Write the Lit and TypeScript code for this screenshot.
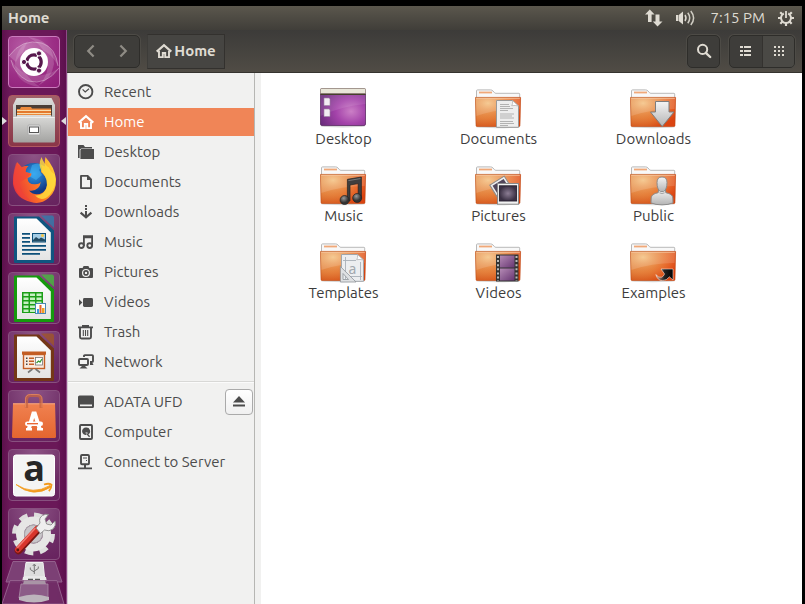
import { LitElement, html, svg, css, type TemplateResult, type SVGTemplateResult } from "lit";
import { customElement, property, state } from "lit/decorators.js";
import { classMap } from "lit/directives/class-map.js";

type Drawing = SVGTemplateResult;

/* ---------- symbolic 16px glyphs ---------- */
const glyphs: Record<string, Drawing> = {
  recent: svg`<circle cx="7.700" cy="7.700" r="6.700" fill="none" stroke="currentColor" stroke-width="1.900"/>
    <path d="M4.600 5.400 7.200 8 11 4.800" fill="none" stroke="currentColor" stroke-width="1.200"/>`,
  home: svg`<path d="M.7 8.600 8 2.200l7.300 6.400" fill="none" stroke="currentColor" stroke-width="2.200"/>
    <path d="M3 8v6.100h3.800V10h2.400v4.100H13V8" fill="none" stroke="currentColor" stroke-width="1.900"/>`,
  desktop: svg`<path d="M0 1h5.500l1.500 2h7v1.400H3.200L1.600 5.600V14H0z"/><path d="M3 5h13v10H2.400V6.400z"/>`,
  documents: svg`<path d="M3 1.900h6.600L13 5.400v8.700H3z" fill="none" stroke="currentColor" stroke-width="1.900" stroke-linejoin="round"/>
    <path d="M9 1v5h5L9.400 1z"/>`,
  downloads: svg`<path d="M7 1h2v2H7zM7 4h2v2H7zM7 7h2v5H7z"/>
    <path d="M2.600 8.600 8 13.400l5.400-4.800" fill="none" stroke="currentColor" stroke-width="2.100"/>`,
  music: svg`<path d="M5.900 12V2.200h8.200V11M5.900 3.400h8.200" fill="none" stroke="currentColor" stroke-width="1.800"/>
    <circle cx="3.400" cy="11.600" r="2.400" fill="none" stroke="currentColor" stroke-width="1.900"/>
    <circle cx="11.700" cy="11.600" r="2.400" fill="none" stroke="currentColor" stroke-width="1.900"/>`,
  pictures: svg`<path fill-rule="evenodd" d="M2 4h2.600l1-2h4.800l1 2H14q1 0 1 1v8q0 1-1 1H2q-1 0-1-1V5q0-1 1-1zM8 4.900a4 4 0 1 0 0 8 4 4 0 0 0 0-8z"/>
    <circle cx="8" cy="8.900" r="2" fill="none" stroke="currentColor" stroke-width="1.600"/>`,
  videos: svg`<rect x="5" y="4" width="10" height="9" rx="1.400"/><path d="M1 5.200 4.400 8.500 1 11.800z"/>`,
  trash: svg`<path d="M0 2.400h15v1.900H0zM4 .9h7v1.600H4z"/>
    <path d="M2 4v9q0 1.500 1.500 1.500h8q1.500 0 1.500-1.500V4" fill="none" stroke="currentColor" stroke-width="1.900"/>
    <path d="M5.300 6v6M7.500 6v6M9.700 6v6" stroke="currentColor" stroke-width="1.100"/>`,
  network: svg`<path d="M6 3V2q0-.9.9-.9h7.200q.9 0 .9.900v5q0 .9-.9.900H12" fill="none" stroke="currentColor" stroke-width="1.900"/>
    <path d="M12 8h2l1.500 3H12z"/>
    <rect x="1" y="5" width="9" height="6" rx="1" fill="none" stroke="currentColor" stroke-width="1.900"/>
    <path d="M4 12h3l2.500 2.600h-8z"/>`,
  drive: svg`<path fill-rule="evenodd" d="M1.600 1.500h12.800Q16 1.500 16 3.100v9.300q0 1.600-1.600 1.600H1.600Q0 14 0 12.400V3.100Q0 1.500 1.600 1.500zM2 10.600v1.600h12v-1.600z"/>`,
  computer: svg`<rect x="2" y="1" width="12" height="14" rx="1" fill="none" stroke="currentColor" stroke-width="1.900"/>
    <path d="M8 3.600a3.700 3.700 0 1 0 .6 7.300L7.400 8.400l2 .2 1 1.800A3.700 3.700 0 0 0 8 3.600z"/>
    <path d="m8.600 9.400 3 3.400" stroke="currentColor" stroke-width="1.400"/>`,
  server: svg`<rect x="3" y="1" width="8" height="9.200" rx="1" fill="none" stroke="currentColor" stroke-width="1.900"/>
    <path d="M5 3.400h4v1.200H5zM8 6h1v1H8zM6 10h2v4H6zM0 13.400h14v1.800H0z"/>`,
  eject: svg`<path d="M8 2 14 8.600H2zM2 10.600h12v2H2z"/>`,
  back: svg`<path d="M10.600 2.400 5.200 8l5.400 5.600" fill="none" stroke="currentColor" stroke-width="2.200"/>`,
  forward: svg`<path d="M5.400 2.400 10.800 8l-5.400 5.600" fill="none" stroke="currentColor" stroke-width="2.200"/>`,
  search: svg`<circle cx="6.600" cy="6.400" r="4.600" fill="none" stroke="currentColor" stroke-width="2"/>
    <path d="m9.800 9.800 4.400 4.200" stroke="currentColor" stroke-width="2.400" stroke-linecap="round"/>`,
  list: svg`<path d="M2 3h3v2H2zM6 3h7v2H6zM2 7h3v2H2zM6 7h7v2H6zM2 11h3v2H2zM6 11h7v2H6z"/>`,
  grid: svg`<path d="M3 3h2v2H3zM7 3h2v2H7zM11 3h2v2h-2zM3 7h2v2H3zM7 7h2v2H7zM11 7h2v2h-2zM3 11h2v2H3zM7 11h2v2H7zM11 11h2v2h-2z"/>`,
};

const glyph = (name: string): TemplateResult =>
  html`<svg class="glyph" viewBox="0 0 16 16" fill="currentColor" aria-hidden="true">${glyphs[name]}</svg>`;

/* ---------- folder artwork, 46 x 38 ---------- */
const folderBase = svg`
  <ellipse cx="23" cy="38" rx="22" ry="1.200" fill="#000" opacity=".16"/>
  <path d="M1.500 9V1.900Q1.500.9 2.500.9H15.600Q17 .9 18 2l1.400 1.600q.6.7 1.600.7H44q.7 0 .7.8V9z" fill="#f8f8f8" stroke="#b9b9b9"/>
  <rect x="4" y="2.600" width="13" height="1.800" fill="#f0a878"/>
  <path d="M.4 8.400h45.200L45 36.600q0 .9-1 .9H2q-1 0-1-.9z" fill="url(#folder)"/>
  <path d="M.4 8.400h45.200L45 36.600q0 .9-1 .9H2q-1 0-1-.9z" fill="url(#folderGlow)"/>
  <path d="M1 9h44l-.3 11Q22 20 1.200 27z" fill="#fff" opacity=".14"/>
  <path d="M.4 8.400h45.200L45 36.600q0 .9-1 .9H2q-1 0-1-.9z" fill="none" stroke="#b8430f" stroke-opacity=".65" stroke-width=".8"/>
  <path d="M1.200 9.300h43.600" stroke="#f7c8a2" stroke-width=".8"/>`;

const emblems: Record<string, Drawing> = {
  Documents: svg`<path d="M21.500 11.500h16l6 5.500v21.300h-22z" fill="#eee" stroke="#999"/>
    <path d="M37.500 11.500q.6 3.600-.8 5.200 3.600-.6 6.800.3z" fill="#fff" stroke="#aaa" stroke-width=".7"/>
    <path d="M25 15.500h9M25 17.500h10M25 19.500h13M25 21.500h8M25 25h14M25 27h12M25 29h14M25 32.500h13M25 34.500h14M25 36.500h8" stroke="#aaa" stroke-width=".9"/>`,
  Downloads: svg`<path d="M25.500 12.500H39V23h5L32.200 37.500 20.500 23h5z" fill="url(#steel)" stroke="#7d7d7d"/>`,
  Music: svg`<path d="M27.400 13.300 41.400 11V32.600H38.200V17.600L30 19V35H27.400z" fill="#3e3e3e" stroke="#222" stroke-width=".7"/>
    <path d="m28.400 14.600 12-2" stroke="#888" stroke-width=".8"/>
    <circle cx="24.600" cy="34" r="4.500" fill="url(#ball)" stroke="#222" stroke-width=".7"/>
    <circle cx="37.200" cy="32" r="4.500" fill="url(#ball)" stroke="#222" stroke-width=".7"/>`,
  Pictures: svg`<g transform="rotate(-32 26 21)"><rect x="17.500" y="13.500" width="17" height="17" fill="#eee" stroke="#8a8a8a"/><rect x="19.500" y="15.500" width="13" height="12" fill="#51465a"/></g>
    <rect x="22.500" y="17.500" width="21" height="20.700" fill="#f2f2f2" stroke="#8a8a8a"/>
    <rect x="24.400" y="19.800" width="17.200" height="15.200" fill="url(#photo)" stroke="#27202f" stroke-width=".9"/>`,
  Public: svg`<path d="M28.600 23.500h6.800l.4 3.200q6.800 1.200 7 5.200l.2 5q-4.600 2-11 2t-11-2l.2-5q.2-4 7-5.200z" fill="url(#steel)" stroke="#8c8c8c"/>
    <path d="M32 11q5 0 5 5.600 0 6.800-3.400 9h-3.200Q27 23.400 27 16.600 27 11 32 11z" fill="url(#steel)" stroke="#8c8c8c"/>
    <path d="M29.400 26.800q2.600 1.800 5.200 0" fill="none" stroke="#aaa"/>`,
  Templates: svg`<path d="M21.500 11.500h16l6 5.500v21.300h-22z" fill="#eceef0" stroke="#a2a6aa"/>
    <path d="M37.500 11.500q.6 3.600-.8 5.200 3.600-.6 6.800.3z" fill="#fff" stroke="#aaa" stroke-width=".7"/>
    <path d="M25.500 14v22M40.500 19v18M23 17.500h13M28 33.500h14" stroke="#a9b0b8" stroke-width=".9"/>
    <text x="32.500" y="31" class="emblem-letter" text-anchor="middle">a</text>
    <path fill-rule="evenodd" d="M20.400 23.500V39H36zM23 30.500 28.500 36.500H23z" fill="#dfe1e3" stroke="#8f9499" stroke-width=".8"/>`,
  Videos: svg`<rect x="21" y="11.500" width="22.500" height="27" fill="#333"/>
    <rect x="25" y="12.500" width="14.500" height="12" fill="url(#film)"/><rect x="25" y="25.500" width="14.500" height="12" fill="url(#film)"/>
    <path d="M23 13v25M41.500 13v25" stroke="#bbb" stroke-width="2" stroke-dasharray="2 2.100"/>`,
  Examples: svg`<path d="M31 26h12v11l-3.600-3.200q-2.600 3.600-7 3.800-4.600.2-6.600-6 3 3.600 6 2.600 1.800-1 2.800-3.200z" fill="url(#link)" stroke="#fff" stroke-opacity=".7" stroke-width=".7"/>`,
};

const desktopArt = svg`
  <ellipse cx="23" cy="38.200" rx="22" ry="1.200" fill="#000" opacity=".16"/>
  <rect x=".5" y=".5" width="45" height="37" rx="1.500" fill="url(#desk)" stroke="#5b2a63" stroke-width=".8"/>
  <path d="M.5 6.500h45V16Q22 18 .5 28z" fill="#fff" opacity=".1"/>
  <path d="M.5 1.500Q.5.500 1.500.500h43q1 0 1 1V5.500H.5z" fill="#e9e6d8" stroke="#9d9a80" stroke-width=".6"/>
  <path d="M.5 6.300h45" stroke="#45402a" stroke-width="1.200"/>
  <path d="M4 10h5l1 1v6.500H4zM4 21h5l1 1v6.500H4z" fill="#f2edf3" stroke="#9a84a0" stroke-width=".6"/>`;

/* ---------- launcher artwork, 52 x 52 ---------- */
const page = (edge: string, corner: string, body: Drawing): Drawing => svg`
  <path d="M7 3.500H31L46 17.500V49Q46 50 45 50H7Q6 50 6 49V4.500Q6 3.500 7 3.500z" fill="${edge}"/>
  <path d="M9 5.500H28.500L42.800 19.500V47H9z" fill="url(#paper)"/>
  <path d="M33 2.500H44.500L46 4V15z" fill="${corner}" opacity=".75"/>
  ${body}`;

const launcherArt: Record<string, Drawing> = {
  "Search your computer": svg`
    <g fill="#fff">
      <path d="M1 20Q14 2 34 7 48 12 50 30 42 14 28 13 14 12 8 26z" opacity=".16"/>
      <path d="M20 1Q46 4 46 28 44 42 30 50 44 36 38 20 34 8 20 1z" opacity=".16"/>
      <path d="M51 32Q38 50 20 45 6 38 3 24 12 38 25 40 40 40 51 32z" opacity=".14"/>
      <path d="M32 51Q6 48 7 26 9 12 20 5 12 18 14 30 18 42 32 51z" opacity=".14"/>
    </g>
    <g fill="none" stroke="#fff" stroke-width=".8" stroke-opacity=".4">
      <path d="M1 20Q14 2 34 7 48 12 50 30"/><path d="M51 32Q38 50 20 45 6 38 3 24"/>
    </g>
    <circle cx="26" cy="26" r="14" fill="#fff"/>
    <circle cx="26" cy="26" r="7.200" fill="none" stroke="#57184d" stroke-width="3.200" stroke-dasharray="13.500 1.580" stroke-dashoffset="6.750"/>
    <g fill="#57184d" stroke="#fff" stroke-width="1"><circle cx="16" cy="26" r="2.600"/><circle cx="31" cy="17.400" r="2.600"/><circle cx="31" cy="34.600" r="2.600"/></g>`,
  Files: svg`
    <path d="M8 4Q8 3 9 3H43Q44 3 44 4L47 10V43H5V10z" fill="url(#cabinet)"/>
    <rect x="8" y="10" width="36" height="13" fill="#4b3d35"/>
    <path d="M9 17V14h3l1-2h10l1 1.500h19V22H9z" fill="#ec8a3c"/><path d="M9 15.500h34M9 18.500h34" stroke="#f9dcae" stroke-width="1.200"/><path d="M9 17h34" stroke="#d96820"/>
    <path d="M5 22H8L9 20H43L44 22H47V46Q47 47.500 45.500 47.500H6.500Q5 47.500 5 46z" fill="url(#cabinet)"/>
    <path d="M5.500 22.500h41" stroke="#eee"/>
    <rect x="20" y="30" width="12" height="10" rx="1" fill="#ececec" stroke="#aaa"/>
    <rect x="21.500" y="32" width="9" height="5.500" fill="#fff" stroke="#555"/>`,
  Firefox: svg`
    <circle cx="26" cy="27" r="18" fill="url(#globe)"/>
    <path d="M24 11q6-3 10 0l-3 5 3 5-6 5-7-4z" fill="#42b4f5" opacity=".55"/>
    <path d="M9 8q3 3 4.600 5.200Q17 11.500 20.500 12 17.500 14.300 17.600 18l5.800 1.500q.4 3-3.800 4.500 0 6.500 7.500 6.300 5.200-.4 5.900-2.800Q31 38 21 36.500q6 6.500 14 2Q40 34.500 39 27q-1-5-6-9 1.500-4 0-7.500l4 2q-.6-5 .4-9.500Q46.500 13 48 25q.6 12-7.400 19T23 48Q7.500 44.500 5 30 4.500 21 9 8z" fill="url(#fire)"/>
    <path d="M33.500 3q-4 8 .5 15 7 8 4 17-3.500 7-11 6.500Q34 49 42 40.500q7-8 5-20-4-2-6-7-5-3-7.500-10.500z" fill="#ffdf3d" opacity=".8"/>
    <path d="M8 9Q3 23 7 34q5 11 16 13Q10 38 12 28l7-4 4-4-5-2q-1-3 2-6l-6 1z" fill="#f0433a" opacity=".6"/>`,
  "LibreOffice Writer": page("#0f5580", "#2e7fb0", svg`
    <path d="M14 20h8v1.800h-8zM14 24h8v1.800h-8zM14 28h8v1.800h-8zM14 32h24v1.800H14zM14 36h24v1.800H14zM14 40h18v1.800H14z" fill="#0c4f79"/>
    <rect x="24.500" y="20.500" width="13" height="8.500" fill="#a5cde5" stroke="#0c4f79"/><path d="M25 28.500V27l3-3 3 2 2-1.500 4 2v2z" fill="#234b62"/><circle cx="34.500" cy="22.500" r="1.500" fill="#f5c645"/>`),
  "LibreOffice Calc": page("#159a0d", "#43c23a", svg`
    <rect x="14" y="20" width="21" height="21" fill="#1b9e17"/>
    <path d="M15.500 21.500h5v2.500h-5zM22 21.500h5v2.500h-5zM28.500 21.500h5v2.500h-5zM15.500 25.500h5V28h-5zM22 25.500h5V28h-5zM28.500 25.500h5V28h-5zM15.500 29.500h5V32h-5zM22 29.500h5V32h-5zM15.500 33.500h5V36h-5zM22 33.500h5V36h-5zM15.500 37.500h5V40h-5zM22 37.500h5V40h-5z" fill="#c6f0c3"/>
    <path d="M28.500 29.500h5V32h-5z" fill="#c6f0c3"/>
    <rect x="27.500" y="31.500" width="10" height="10" fill="#fff" stroke="#4c86b5"/><path d="M29 37h2v4h-2z" fill="#3b9ae1"/><path d="M31.500 33h2v8h-2z" fill="#e4652a"/><path d="M34 36h2.500v5H34z" fill="#f0a024"/>`),
  "LibreOffice Impress": page("#743717", "#a25724", svg`
    <rect x="14" y="20.500" width="24" height="3.200" fill="#c35e24"/>
    <rect x="15.500" y="23.500" width="21" height="14" fill="#fbe9dc" stroke="#c35e24" stroke-width="1.400"/>
    <path d="M18 26.500h1.500V28H18zM18 29.500h1.500V31H18zM18 32.500h1.500V34H18z" fill="#444"/><path d="M21 26.500h5V28h-5zM21 29.500h5V31h-5zM21 32.500h5V34h-5z" fill="#c35e24"/>
    <rect x="27.500" y="26.500" width="7" height="7.500" fill="#fff" stroke="#777" stroke-width=".8"/><path d="m28.500 32 2-2 1.500 1 2-3" fill="none" stroke="#3a9b35" stroke-width="1.300"/>
    <path d="M24.500 38 20 41.500M27.500 38 32 41.500" stroke="#777" stroke-width="1.600"/>`),
  "Ubuntu Software": svg`
    <path d="M5 13.500H47L48 46.500Q48 48 46.500 48H5.500Q4 48 4 46.500z" fill="url(#bag)"/>
    <path d="M5 13.800H47" stroke="#f7a780"/>
    <path d="M18.500 18V9.500Q18.500 5.500 22.500 5.500h6.500q4 0 4 4v8.500" fill="none" stroke="#c8643f" stroke-width="3.200" opacity=".75"/>
    <path d="M17.500 17.500V9.500Q17.500 4.500 22.500 4.500h6.500q5 0 5 5v8" fill="none" stroke="#ee9468" stroke-width=".8" opacity=".8"/>
    <path d="M20.800 39 25.400 23.500h1.400L31.800 39" fill="none" stroke="#fff" stroke-width="4"/>
    <path d="M18 38h6v2.500h-6zM29 38h6v2.500h-6z" fill="#fff"/>
    <rect x="17" y="31.500" width="18" height="4.400" rx="2.200" fill="#fff"/><path d="M19 33.700h11" stroke="#e8602c" stroke-width="1.300"/>`,
  Amazon: svg`
    <rect x="5.500" y="6" width="41" height="41" rx="2.500" fill="#f4f4f4" stroke="#fff"/>
    <text x="26" y="32" class="amazon-letter" text-anchor="middle">a</text>
    <path d="M8 35.500Q25 46.500 42 36.500l1 1.500Q25 49.500 8 35.500z" fill="#f39a1d" stroke="#f39a1d" stroke-width=".8"/>
    <path d="M36 35.500q5-1.600 7.500.2 0 3.500-2.600 6.500" fill="none" stroke="#f39a1d" stroke-width="1.800"/>`,
  "System Settings": svg`
    <circle cx="25.500" cy="26" r="18.500" fill="none" stroke="#dededd" stroke-width="6" stroke-dasharray="8.100 6.430"/>
    <circle cx="25.500" cy="26" r="13.500" fill="none" stroke="#e6e6e5" stroke-width="8"/>
    <circle cx="25.500" cy="26" r="9" fill="#c9c6ca" stroke="#aaa"/>
    <path d="M10.500 42.500 30 21.500" stroke="#7b1713" stroke-width="7.500" stroke-linecap="round"/>
    <path d="M10 41.500 29 21" stroke="#d8352c" stroke-width="6" stroke-linecap="round"/>
    <path d="M9.500 39.500 27 20.500" stroke="#f07a70" stroke-width="1.600" stroke-linecap="round"/>
    <circle cx="9.800" cy="42" r="1.400" fill="#5a1512"/>
    <path d="m28 20 4-5Q30.500 10 34.500 7.500q3-2 6-1L37 11l1.600 5L43 17l4-4q1.500 4.500-2 8-4 3-8.500 1l-4 3.500z" fill="#efefef" stroke="#8a8a8a" stroke-width=".9"/>`,
};

const places = [
  ["Recent", "recent"], ["Home", "home"], ["Desktop", "desktop"], ["Documents", "documents"],
  ["Downloads", "downloads"], ["Music", "music"], ["Pictures", "pictures"], ["Videos", "videos"],
  ["Trash", "trash"], ["Network", "network"],
];
const devices = [["ADATA UFD", "drive"], ["Computer", "computer"], ["Connect to Server", "server"]];
const files = ["Desktop", "Documents", "Downloads", "Music", "Pictures", "Public", "Templates", "Videos", "Examples"];

const baseFont = css`
  :host { font-family: Ubuntu, "Noto Sans", sans-serif; font-size: 15px; line-height: 20px; }
  * { box-sizing: border-box; }
  button { font: inherit; color: inherit; margin: 0; padding: 0; border: 0; background: none; }
  a { color: inherit; text-decoration: none; }
  svg { display: block; flex: none; }
  .defs { position: absolute; }
  .glyph { width: 16px; height: 16px; }
`;

@customElement("top-panel")
export class TopPanel extends LitElement {
  @property() heading = "";
  static styles = [baseFont, css`
    :host { display: flex; align-items: center; height: 24px; padding: 0 8px 0 6px; color: #dfdbd2;
      background: linear-gradient(#5b574d, #403e39); }
    .heading { font-weight: 700; flex: 1; }
    .indicators { display: flex; align-items: center; gap: 13px; }
    .indicators button { display: flex; }
  `];
  render() {
    return html`
      <span class="heading">${this.heading}</span>
      <div class="indicators">
        <button aria-label="Network"><svg width="18" height="18" viewBox="0 0 18 18" fill="currentColor">
          <path d="M4.800 .5 9.600 5.500H6.600v7.500H3V5.500H0zM10.500 5.500h4v7h3L12.500 17.500 7.800 12.500h2.700z"/></svg></button>
        <button aria-label="Sound"><svg width="21" height="18" viewBox="0 0 21 18" fill="currentColor">
          <path d="M0 6h2.500v6H0zM3 5.800 7 2.500v13L3 12.200z"/>
          <path d="M9 6q2 3 0 6" fill="none" stroke="currentColor" stroke-width="1.500"/>
          <path d="M11.800 3.800q3.800 5.200 0 10.400M14.800 2q5.600 7 0 14" fill="none" stroke="currentColor" stroke-width="1.500" opacity=".9"/></svg></button>
        <time>7:15 PM</time>
        <button aria-label="Session"><svg width="16" height="16" viewBox="0 0 16 16" fill="none" stroke="currentColor">
          <path d="M5.800 3.500a5 5 0 1 0 4.400 0" stroke-width="2"/>
          <path d="M8 1v7" stroke-width="1.800"/>
          <path d="M13 8h3M0 8h3M8 13v3M11.500 11.500l2.200 2.200M4.500 11.500l-2.200 2.200M12 4l1.800-1.800M4 4 2.200 2.200" stroke-width="2.200"/></svg></button>
      </div>`;
  }
}

@customElement("app-launcher")
export class AppLauncher extends LitElement {
  static styles = [baseFont, css`
    :host { display: flex; flex-direction: column; align-items: flex-start; width: 65px; padding-top: 6px;
      border-right: 1px solid #8e4a86; background: linear-gradient(90deg, #5c104c, #6a1858 12%, #6a1858 85%, #5c0f4d); }
    .apps { display: flex; flex-direction: column; gap: 7px; width: 100%; padding: 0 6px; }
    .app { position: relative; display: block; width: 52px; height: 52px; border-radius: 4px;
      border: 1px solid #88507f; background: radial-gradient(circle at 50% 0, #8d5486, #6d2c65 65%, #67225e); }
    .app svg { margin: -1px; overflow: visible; }
    .app.dash { border-color: #cb7bbd; background: radial-gradient(circle at 30% 20%, #b55aa3, #9c2f86 55%, #8d1c77); }
    .app.running { border-color: #b05860; background: linear-gradient(#a06169, #8a3547); }
    .running::before, .running::after { content: ""; position: absolute; top: 21px; border: 4px solid transparent; }
    .running::before { left: -7px; border-left: 5px solid #ddd; border-right: 0; }
    .running::after { right: -7px; border-right: 5px solid #ddd; border-left: 0; }
    .amazon-letter { font: 700 36px/1 "Open Sans", sans-serif; fill: #262626; }
  `];
  render() {
    return html`
      <svg class="defs" width="0" height="0" aria-hidden="true"><defs>
        <linearGradient id="paper" x2="0" y2="1"><stop stop-color="#fff"/><stop offset="1" stop-color="#e4e4e4"/></linearGradient>
        <linearGradient id="cabinet" x2="0" y2="1"><stop stop-color="#dcdcda"/><stop offset="1" stop-color="#a3a3a1"/></linearGradient>
        <linearGradient id="bag" x2="0" y2="1"><stop stop-color="#f08150"/><stop offset="1" stop-color="#e4652f"/></linearGradient>
        <radialGradient id="globe" cx=".5" cy=".3"><stop stop-color="#2f9eea"/><stop offset="1" stop-color="#123a86"/></radialGradient>
        <linearGradient id="fire" x1="0" y1=".6" x2="1" y2=".2"><stop stop-color="#e8353a"/><stop offset=".5" stop-color="#ff7a22"/><stop offset="1" stop-color="#ffd836"/></linearGradient>
      </defs></svg>
      <div class="apps">
        ${Object.entries(launcherArt).map(([name, art], i) => html`
          <button class=${classMap({ app: true, dash: i === 0, running: name === "Files" })} aria-label=${name}>
            <svg width="52" height="52" viewBox="0 0 52 52">${art}</svg>
          </button>`)}
      </div>
      <svg width="64" height="44" viewBox="0 0 64 44" role="img" aria-label="Removable drive and trash">
        <path d="M11 1.500H53L60 22H4z" fill="#7c4075" stroke="#935f8c"/>
        <path d="M24 2.500H41L42.500 17H22z" fill="#ddd" stroke="#f0f0f0"/>
        <path d="M32.300 5v9M32.300 12l-4-2.500V7.500M32.300 11l4-2.500V6.500M30.800 6l1.500-2 1.500 2" fill="none" stroke="#777"/>
        <path d="M21 17H44L45 22H20z" fill="#e8e8e8"/><path d="M26 19.500h5M33 19.500h5" stroke="#555" stroke-width="1.600"/>
        <path d="M8 20.500H55L62 44H0z" fill="#723069" fill-opacity=".85" stroke="#935f8c"/>
        <path d="M19 24H46V38Q32 43 17 38z" fill="#8c5c87" stroke="#a98ba6" stroke-width=".8"/>
        <path d="M17 37Q32 32 47 37V40Q32 45 17 40z" fill="#bdb5bc"/>
        <path d="M22 20.500H43L44 24H21z" fill="#a995a6"/>
      </svg>`;
  }
}

@customElement("places-sidebar")
export class PlacesSidebar extends LitElement {
  @property() current = "";
  static styles = [baseFont, css`
    :host { display: block; width: 188px; padding-top: 5px; color: #4c4c4c; background: #f1f1f0;
      border-left: 1px solid #d4c9d2; border-right: 1px solid #b6b6b3; }
    ul { list-style: none; margin: 0; padding: 0; display: flex; flex-direction: column; gap: 2px; }
    li { display: flex; align-items: center; height: 28px; padding-right: 1px; }
    li.current { background: #f08557; color: #fff; }
    a { display: flex; align-items: center; gap: 10px; flex: 1; padding-left: 10px; }
    hr { margin: 5px 0; height: 2px; border: 0; border-top: 1px solid #d8d8d6; background: #fbfbfb; }
    .eject { display: grid; place-items: center; width: 28px; height: 26px; border: 1px solid #aaa;
      border-radius: 4px; background: linear-gradient(#fff, #f0f0f0); }
  `];
  private row([label, icon]: string[]) {
    const here = label === this.current;
    return html`<li class=${classMap({ current: here })}>
      <a href="#${icon}">${glyph(icon)}<span>${label}</span></a>
      ${icon === "drive" ? html`<button class="eject" aria-label="Eject ${label}">${glyph("eject")}</button>` : ""}
    </li>`;
  }
  render() {
    return html`<nav aria-label="Places">
      <ul>${places.map((p) => this.row(p))}</ul><hr /><ul>${devices.map((d) => this.row(d))}</ul>
    </nav>`;
  }
}

@customElement("file-grid")
export class FileGrid extends LitElement {
  static styles = [baseFont, css`
    :host { display: grid; grid-template-columns: repeat(auto-fill, 155px); align-content: start; gap: 15px 0;
      padding: 14px 0 14px 5px; background: #fff; color: #3c3c3c; min-width: 0; }
    .file { display: flex; flex-direction: column; align-items: center; }
    .emblem-letter { font: 14px "Noto Sans", sans-serif; fill: #a2a8ae; }
  `];
  render() {
    return html`
      <svg class="defs" width="0" height="0" aria-hidden="true"><defs>
        <linearGradient id="folder" x2="1" y2=".25"><stop stop-color="#dd8140"/><stop offset=".6" stop-color="#e2712f"/><stop offset="1" stop-color="#ec4e1c"/></linearGradient>
        <radialGradient id="folderGlow" cx=".28" cy=".2" r=".85"><stop stop-color="#f8cf90" stop-opacity=".85"/><stop offset=".6" stop-color="#ea8c44" stop-opacity=".45"/><stop offset="1" stop-color="#cc3c08" stop-opacity=".55"/></radialGradient>
        <linearGradient id="steel" x2="0" y2="1"><stop stop-color="#f4f4f4"/><stop offset="1" stop-color="#b4b4b4"/></linearGradient>
        <radialGradient id="ball" cx=".4" cy=".3"><stop stop-color="#999"/><stop offset="1" stop-color="#333"/></radialGradient>
        <radialGradient id="photo"><stop stop-color="#8c7d94"/><stop offset="1" stop-color="#3b3144"/></radialGradient>
        <linearGradient id="film" x2="1" y2="1"><stop stop-color="#b58bb5"/><stop offset="1" stop-color="#673672"/></linearGradient>
        <linearGradient id="link"><stop stop-color="#e0a890"/><stop offset=".5" stop-color="#222"/><stop offset="1" stop-color="#000"/></linearGradient>
        <radialGradient id="desk" cx=".68" cy=".62" r=".75"><stop stop-color="#cb7fc6"/><stop offset=".45" stop-color="#a443aa"/><stop offset="1" stop-color="#6a2c7c"/></radialGradient>
      </defs></svg>
      ${files.map((name) => html`<a class="file" href="#${name}">
        <svg width="48" height="42" viewBox="0 -1 48 42" aria-hidden="true">
          ${name === "Desktop" ? desktopArt : svg`<g transform="translate(0 1)">${folderBase}${emblems[name]}</g>`}
        </svg>
        <span>${name}</span>
      </a>`)}`;
  }
}

@customElement("app-root")
export class AppRoot extends LitElement {
  @state() private folder = "Home";
  static styles = [baseFont, css`
    :host { display: flex; flex-direction: column; min-height: 100vh; padding: 6px 3px 0 2px; box-sizing: border-box; background: #000; }
    .desktop { display: flex; flex: 1; }
    .window { display: flex; flex-direction: column; flex: 1; min-width: 0; }
    .toolbar { display: flex; align-items: center; height: 43px; padding: 0 7px; color: #dfdbd2;
      background: linear-gradient(#3c3b39, #504c45); border-bottom: 1px solid #35332f; }
    .group { display: flex; height: 33px; border: 1px solid #2e2d2a; border-radius: 5px; overflow: hidden;
      background: #3e3d3a; box-shadow: 0 0 0 1px #4d4b46; }
    .group button { display: grid; place-items: center; width: 32px; }
    .group button.split { border-left: 1px solid #34322f; }
    .group button.single { width: 31px; }
    .nav button { color: #8f8c85; }
    .group .active { background: #4a4945; }
    .path { display: flex; align-items: center; justify-content: center; gap: 2px; width: 78px; height: 35px; margin: 0 auto 0 7px;
      font-weight: 700; border: 1px solid #33312e; border-left-color: #3d3c39; background: #464542; }
    .views { margin-left: 9px; }
    .body { display: flex; flex: 1; }
    .handle { width: 6px; background: #f1f1f0; }
    file-grid { flex: 1; }
  `];
  render() {
    return html`
      <top-panel heading=${this.folder}></top-panel>
      <div class="desktop">
        <app-launcher></app-launcher>
        <main class="window">
          <div class="toolbar">
            <div class="group nav">
              <button aria-label="Back">${glyph("back")}</button>
              <button aria-label="Forward">${glyph("forward")}</button>
            </div>
            <button class="path">${glyph("home")}${this.folder}</button>
            <div class="group"><button class="single" aria-label="Search">${glyph("search")}</button></div>
            <div class="group views">
              <button aria-label="List view">${glyph("list")}</button>
              <button class="split active" aria-label="Icon view">${glyph("grid")}</button>
            </div>
          </div>
          <div class="body">
            <places-sidebar current=${this.folder}></places-sidebar>
            <div class="handle"></div>
            <file-grid></file-grid>
          </div>
        </main>
      </div>`;
  }
}
